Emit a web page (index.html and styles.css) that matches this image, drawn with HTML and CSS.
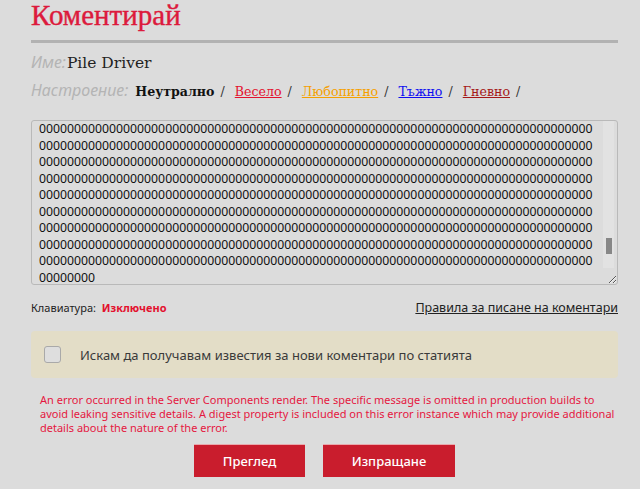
FILE: index.html
```html
<!DOCTYPE html>
<html lang="bg">
<head>
  <meta charset="UTF-8" />
  <meta name="viewport" content="width=device-width, initial-scale=1" />
  <title>Коментирай</title>
  <link rel="stylesheet" href="styles.css">
</head>
<body>
  <div class="comment-form">
    <h1 class="title">Коментирай</h1>

    <div class="field-row">
      <span class="label">Име:</span>
      <span class="user-name">Pile Driver</span>
    </div>

    <div class="field-row mood-row">
      <span class="label">Настроение:</span>
      <span class="moods">
        <a class="mood neutral">Неутрално</a><span class="sep">/</span>
        <a class="mood happy" href="#">Весело</a><span class="sep">/</span>
        <a class="mood curious" href="#">Любопитно</a><span class="sep">/</span>
        <a class="mood sad" href="#">Тъжно</a><span class="sep">/</span>
        <a class="mood angry" href="#">Гневно</a><span class="sep">/</span>
      </span>
    </div>

    <div class="textarea-wrapper">
      <textarea id="commentInput" spellcheck="false">0000000000000000000000000000000000000000000000000000000000000000000000000000000
0000000000000000000000000000000000000000000000000000000000000000000000000000000
0000000000000000000000000000000000000000000000000000000000000000000000000000000
0000000000000000000000000000000000000000000000000000000000000000000000000000000
0000000000000000000000000000000000000000000000000000000000000000000000000000000
0000000000000000000000000000000000000000000000000000000000000000000000000000000
0000000000000000000000000000000000000000000000000000000000000000000000000000000
0000000000000000000000000000000000000000000000000000000000000000000000000000000
0000000000000000000000000000000000000000000000000000000000000000000000000000000
00000000</textarea>
      <div class="scroll-track"><div class="scroll-thumb"></div></div>
    </div>

    <div class="keyboard-row">
      <span class="keyboard">Клавиатура: <b class="off">Изключено</b></span>
      <a class="rules-link" href="#">Правила за писане на коментари</a>
    </div>

    <label class="notify-box">
      <input type="checkbox" class="notify-check" />
      <span>Искам да получавам известия за нови коментари по статията</span>
    </label>

    <p class="error">An error occurred in the Server Components render. The specific message is omitted in production builds to<br>avoid leaking sensitive details. A digest property is included on this error instance which may provide additional details about the nature of the error.</p>

    <div class="buttons">
      <button class="btn preview-btn">Преглед</button>
      <button class="btn send-btn">Изпращане</button>
    </div>
  </div>
</body>
</html>
```

FILE: styles.css
```css
body {
  margin: 0;
  background-color: #dcdcdc;
  font-family: "Noto Sans", sans-serif;
  color: #222;
  overflow: hidden;
}

.comment-form {
  width: 587px;
  margin-left: 31px;
}

.title {
  margin: 0;
  padding-bottom: 10px;
  border-bottom: 3px solid #b2b2b2;
  font-family: "Liberation Serif", serif;
  font-weight: normal;
  font-size: 29px;
  line-height: 30px;
  color: #dc1a3c;
  -webkit-text-stroke: 0.4px #dc1a3c;
}

.field-row {
  margin-top: 9px;
  height: 20px;
  line-height: 20px;
  display: flex;
  align-items: baseline;
}

.mood-row {
  margin-top: 8px;
}

.label {
  font-style: italic;
  font-size: 16px;
  color: #b4b4b4;
  margin-right: 1px;
}

.user-name {
  font-family: "DejaVu Serif", serif;
  font-size: 15.5px;
  color: #222;
}

.moods {
  margin-left: 6px;
  font-family: "DejaVu Serif", serif;
  font-size: 12.6px;
}

.mood {
  text-decoration: underline;
}

.neutral {
  font-weight: bold;
  color: #111;
  text-decoration: none;
}

.happy { color: #e3122f; }
.curious { color: #f5a000; }
.sad { color: #1010f0; }
.angry { color: #a51818; }

.sep {
  margin: 0 6px;
  color: #333;
}

.textarea-wrapper {
  position: relative;
  margin-top: 20px;
}

textarea {
  display: block;
  width: 100%;
  height: 165px;
  box-sizing: border-box;
  padding: 0 20px 0 7px;
  margin: 0;
  background-color: #dcdcdc;
  border: 1px solid #b9b9b9;
  border-radius: 3px;
  font-family: "Noto Sans", sans-serif;
  font-size: 12.25px;
  line-height: 16.5px;
  color: #111;
  overflow: hidden;
  resize: vertical;
  white-space: pre;
}

.scroll-track {
  position: absolute;
  top: 1px;
  right: 4px;
  width: 11px;
  height: 147px;
  background-color: #e2e2e2;
}

.scroll-thumb {
  margin: 117px auto 0;
  width: 6px;
  height: 16px;
  background-color: #878787;
}

.keyboard-row {
  margin-top: 12px;
  height: 20px;
  display: flex;
  justify-content: space-between;
  align-items: center;
}

.keyboard {
  font-size: 11px;
  color: #222;
}

.off {
  color: #e3122f;
  margin-left: 3px;
}

.rules-link {
  font-size: 12.5px;
  color: #222;
  text-decoration: underline;
}

.notify-box {
  margin-top: 14px;
  height: 47px;
  box-sizing: border-box;
  padding-left: 13px;
  display: flex;
  align-items: center;
  background-color: #e3ddc7;
  border-radius: 4px;
  font-size: 13px;
  color: #3a3a3a;
}

.notify-check {
  appearance: none;
  margin: 0 19px 0 0;
  width: 17px;
  height: 17px;
  border: 1px solid #a9a9a9;
  border-radius: 3px;
  background-color: #dedede;
}

.error {
  margin: 15px 0 0;
  padding: 0 2px 0 9px;
  font-size: 11px;
  line-height: 14px;
  color: #e5173f;
}

.buttons {
  margin-top: 9px;
  display: flex;
  justify-content: center;
  gap: 18px;
}

.btn {
  height: 33px;
  border: none;
  border-top: 1px solid #e9a9ad;
  background-color: #c91d2d;
  color: #fff;
  font-family: "Noto Sans", sans-serif;
  font-size: 13px;
  font-weight: 500;
}

.preview-btn {
  width: 111px;
}

.send-btn {
  width: 132px;
}
```
